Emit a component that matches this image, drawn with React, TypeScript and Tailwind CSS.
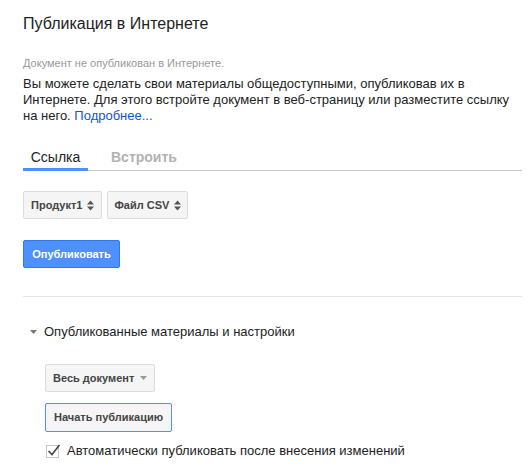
import React from "react";

function UpDown() {
  return (
    <svg width="7" height="11" viewBox="0 0 7 11" className="ml-[5px]">
      <path d="M0 4.5 L3.5 0.5 L7 4.5 Z" fill="#555" />
      <path d="M0 6.5 L3.5 10.5 L7 6.5 Z" fill="#555" />
    </svg>
  );
}

function Caret({ color = "#777" }: { color?: string }) {
  return (
    <svg width="7" height="4" viewBox="0 0 7 4">
      <path d="M0 0 L7 0 L3.5 4 Z" fill={color} />
    </svg>
  );
}

export default function App() {
  return (
    <div className="w-[532px] h-[474px] bg-white font-['Liberation_Sans',Arial,sans-serif] text-[#222] overflow-hidden">
      <div className="pl-[23px] pr-[10px]">
        <h1 className="pt-[14px] text-[16px] leading-[20px] text-[#222] font-normal">
          Публикация в Интернете
        </h1>
        <div className="mt-[22px] text-[11px] leading-[14px] text-[#999]">
          Документ не опубликован в Интернете.
        </div>
        <p className="mt-[6px] text-[13px] leading-[16px] text-[#222] w-[500px]">
          Вы можете сделать свои материалы общедоступными, опубликовав их в
          Интернете. Для этого встройте документ в веб-страницу или разместите ссылку
          на него. <span className="text-[#15c]">Подробнее...</span>
        </p>

        <div className="mt-[25px] flex border-b border-[#c8c8c8] w-[499px]">
          <div className="w-[65px] flex justify-center pb-[2px] border-b-[3px] border-[#4d90fe] -mb-[1px] text-[14px] leading-[17px] text-[#222]">
            Ссылка
          </div>
          <div className="ml-[23px] pb-[2px] text-[14px] leading-[17px] text-[#b2b2b2] font-bold">
            Встроить
          </div>
        </div>

        <div className="mt-[20px] flex gap-[5px]">
          <div className="h-[28px] flex items-center px-[7px] bg-[#f5f5f5] border border-[#dcdcdc] rounded-[2px] text-[11px] font-bold text-[#444]">
            Продукт1
            <UpDown />
          </div>
          <div className="h-[28px] flex items-center px-[6px] bg-[#f5f5f5] border border-[#dcdcdc] rounded-[2px] text-[11px] font-bold text-[#444]">
            Файл CSV
            <UpDown />
          </div>
        </div>

        <div className="mt-[21px] flex">
          <div className="h-[28px] w-[97px] flex items-center justify-center bg-[#4d90fe] border border-[#3079ed] rounded-[2px] text-[11px] font-bold text-white">
            Опубликовать
          </div>
        </div>

        <div className="mt-[28px] h-px bg-[#e5e5e5] w-[499px]" />

        <div className="mt-[27px] flex items-center pl-[7px] text-[13px] leading-[16px] text-[#222]">
          <Caret />
          <span className="ml-[7px]">Опубликованные материалы и настройки</span>
        </div>

        <div className="pl-[22px]">
          <div className="mt-[24px] flex">
            <div className="h-[28px] flex items-center px-[7px] bg-[#f5f5f5] border border-[#dcdcdc] rounded-[2px] text-[11px] font-bold text-[#444] gap-[6px]">
              Весь документ
              <Caret color="#999" />
            </div>
          </div>
          <div className="mt-[11px] flex">
            <div className="h-[29px] flex items-center px-[8px] bg-[#f5f5f5] border border-[#4d90fe] rounded-[2px] text-[11px] font-bold text-[#444]">
              Начать публикацию
            </div>
          </div>
          <div className="mt-[11px] flex items-center">
            <div className="w-[13px] h-[13px] border border-[#c6c6c6] bg-white relative ml-[1px]">
              <svg width="15" height="13" viewBox="0 0 15 13" className="absolute -top-[2px] left-[0px]">
                <path d="M1.5 7 L5 10.5 L12.5 1" stroke="#444" strokeWidth="1.6" fill="none" />
              </svg>
            </div>
            <span className="ml-[8px] text-[13px] leading-[16px] text-[#222]">
              Автоматически публиковать после внесения изменений
            </span>
          </div>
        </div>
      </div>
    </div>
  );
}
